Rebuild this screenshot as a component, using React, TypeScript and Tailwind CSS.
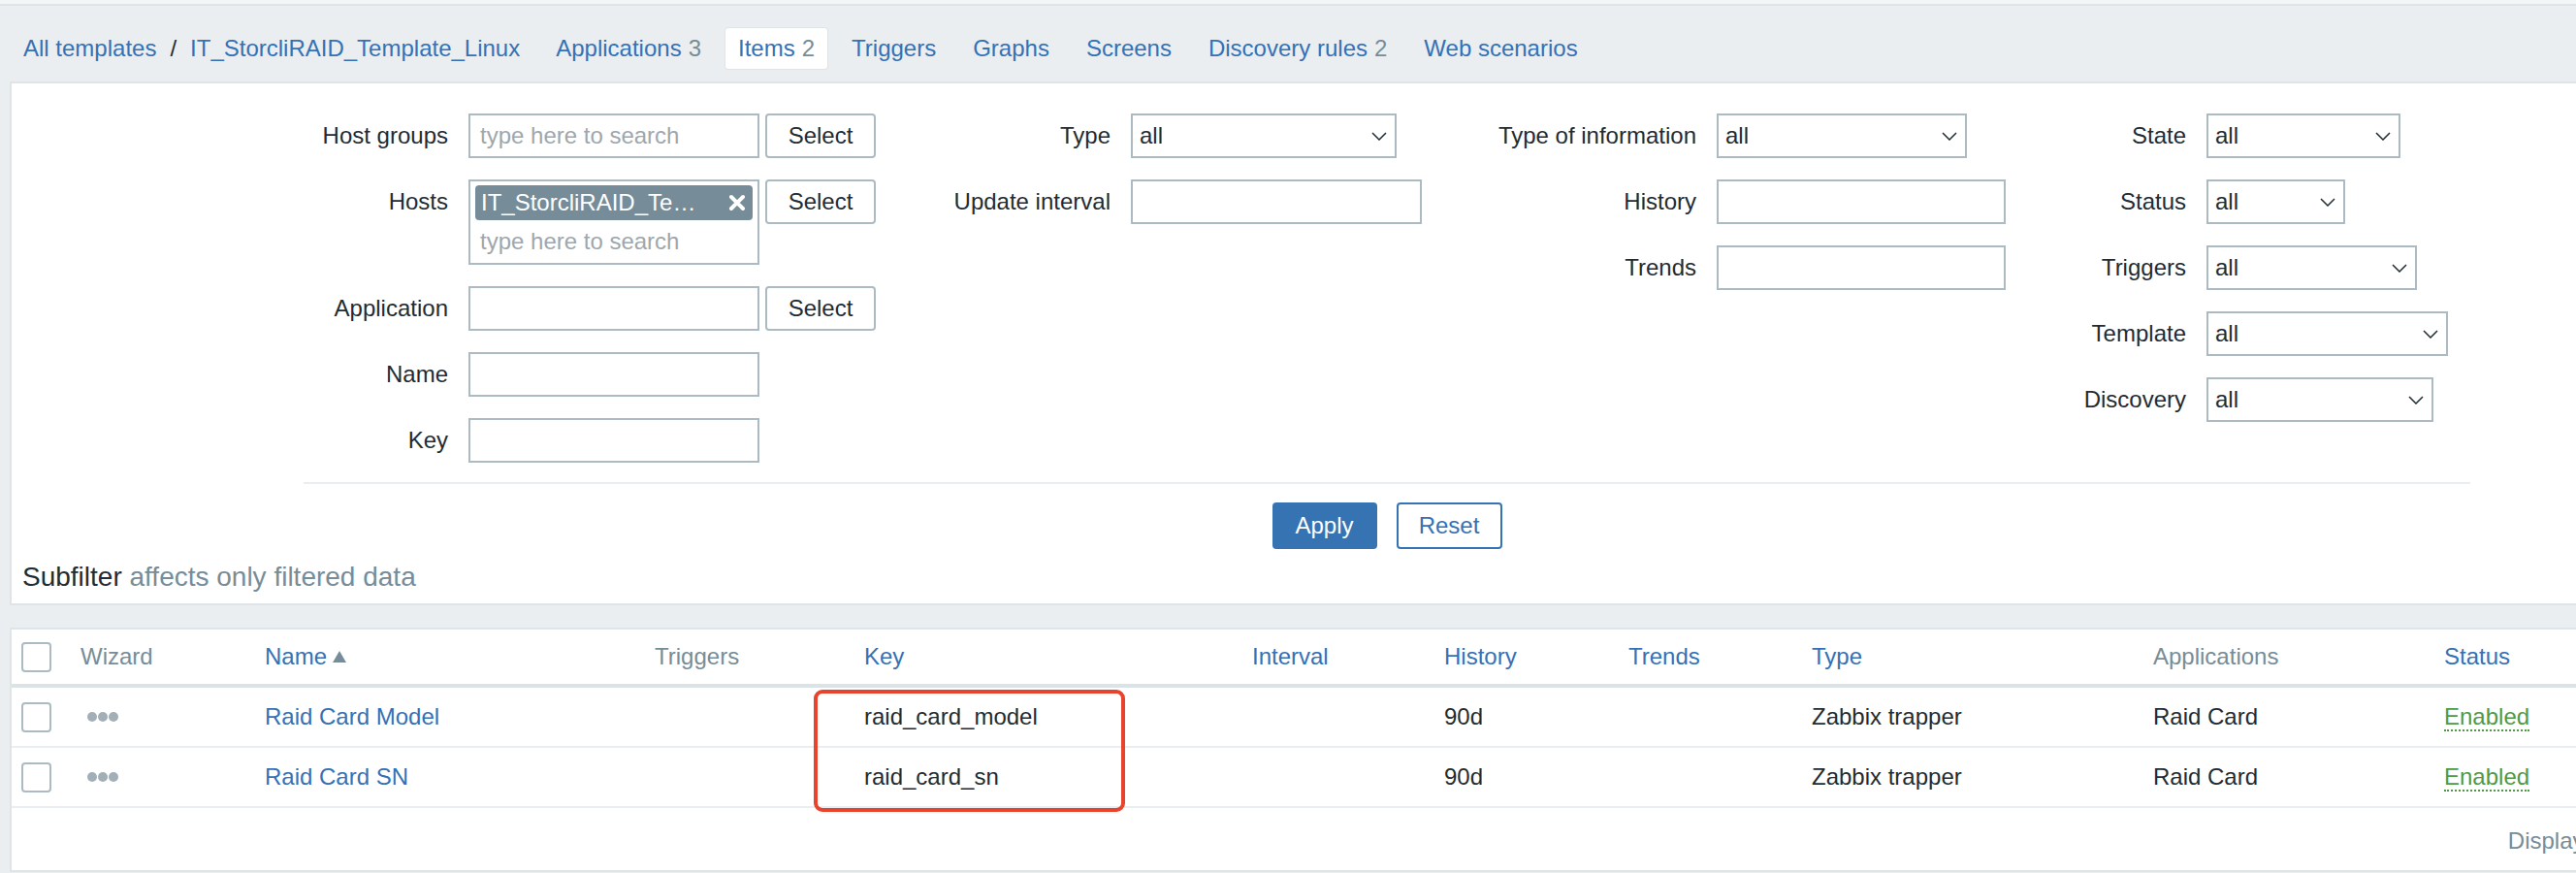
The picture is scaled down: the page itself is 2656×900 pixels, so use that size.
import clsx from "clsx";

const cols =
  "grid grid-cols-[61px_190px_402px_216px_400px_198px_190px_189px_352px_300px_1fr] items-center";

function Chevron() {
  return (
    <svg width="16" height="9" viewBox="0 0 16 9" className="shrink-0">
      <polyline points="1,1 8,8 15,1" fill="none" stroke="#1f2c33" strokeWidth="1.5" />
    </svg>
  );
}

function Label({ children }: { children: React.ReactNode }) {
  return <div className="flex h-[46px] items-center justify-end whitespace-nowrap text-[#1f2c33]">{children}</div>;
}

function TextBox({ placeholder, w = "w-[300px]" }: { placeholder?: string; w?: string }) {
  return (
    <div className={clsx("flex h-[46px] items-center border-2 border-[#acbbc2] bg-white px-[10px] text-[#9ea7ad]", w)}>
      {placeholder}
    </div>
  );
}

function SelectButton() {
  return (
    <div className="flex h-[46px] w-[114px] items-center justify-center rounded-[4px] border-2 border-[#acbbc2] bg-white text-[#1f2c33]">
      Select
    </div>
  );
}

function Dropdown({ w }: { w: string }) {
  return (
    <div className={clsx("flex h-[46px] items-center justify-between border-2 border-[#acbbc2] bg-white pl-[7px] pr-[8px] text-[#1f2c33]", w)}>
      <span>all</span>
      <Chevron />
    </div>
  );
}

function Checkbox() {
  return <div className="h-[31px] w-[31px] rounded-[4px] border-2 border-[#acbbc2] bg-white" />;
}

function Tab({ label, count, active }: { label: string; count?: number; active?: boolean }) {
  return (
    <span
      className={clsx(
        "ml-[12px] flex h-[42px] items-center px-[13px] text-[#3471b6]",
        active && "rounded-[3px] bg-white shadow-[0_0_0_1px_#dfe4e7]"
      )}
    >
      {label}
      {count !== undefined && <span className="ml-[7px] text-[#768d99]">{count}</span>}
    </span>
  );
}

function Dots() {
  return (
    <div className="ml-[7px] flex gap-[1px]">
      <span className="h-[10px] w-[10px] rounded-full bg-[#a3afb7]" />
      <span className="h-[10px] w-[10px] rounded-full bg-[#a3afb7]" />
      <span className="h-[10px] w-[10px] rounded-full bg-[#a3afb7]" />
    </div>
  );
}

const rows = [
  { name: "Raid Card Model", key: "raid_card_model" },
  { name: "Raid Card SN", key: "raid_card_sn" },
];

export default function App() {
  return (
    <div className="h-[900px] w-full overflow-hidden bg-[#ebeef0] font-['Liberation_Sans',Arial,sans-serif] text-[24px] leading-[28px]">
      <div className="w-[2860px]">
        <div className="h-[4px] bg-[#f4f5f6]" />
        <div className="h-[2px] bg-[#dfe4e7]" />

        {/* breadcrumbs + tabs */}
        <div className="flex items-center pb-[13px] pl-[24px] pt-[23px]">
          <span className="text-[#3471b6]">All templates</span>
          <span className="mx-[14px] text-[#1f2c33]">/</span>
          <span className="text-[#3471b6]">IT_StorcliRAID_Template_Linux</span>
          <span className="ml-[12px]" />
          <Tab label="Applications" count={3} />
          <Tab label="Items" count={2} active />
          <Tab label="Triggers" />
          <Tab label="Graphs" />
          <Tab label="Screens" />
          <Tab label="Discovery rules" count={2} />
          <Tab label="Web scenarios" />
        </div>

        {/* filter */}
        <div className="ml-[10px] w-[2838px] border-2 border-r-0 border-[#dfe4e7] bg-white">
          <div className="flex pl-[301px] pt-[31px]">
            <div className="grid w-[652px] grid-cols-[149px_auto] content-start items-start gap-x-[21px] gap-y-[22px]">
              <Label>Host groups</Label>
              <div className="flex gap-[6px]">
                <TextBox placeholder="type here to search" />
                <SelectButton />
              </div>
              <Label>Hosts</Label>
              <div className="flex gap-[6px]">
                <div className="h-[88px] w-[300px] border-2 border-[#acbbc2] bg-white px-[5px] pt-[4px]">
                  <div className="flex h-[36px] items-center justify-between rounded-[4px] bg-[#768d99] pl-[6px] pr-[7px] text-white">
                    <span>IT_StorcliRAID_Te…</span>
                    <svg width="18" height="18" viewBox="0 0 18 18">
                      <path d="M3 3 L15 15 M15 3 L3 15" stroke="#fff" strokeWidth="4" strokeLinecap="round" />
                    </svg>
                  </div>
                  <div className="mt-[8px] pl-[5px] text-[#9ea7ad]">type here to search</div>
                </div>
                <SelectButton />
              </div>
              <Label>Application</Label>
              <div className="flex gap-[6px]">
                <TextBox />
                <SelectButton />
              </div>
              <Label>Name</Label>
              <TextBox />
              <Label>Key</Label>
              <TextBox />
            </div>

            <div className="grid w-[565px] grid-cols-[180px_auto] content-start items-start gap-x-[21px] gap-y-[22px]">
              <Label>Type</Label>
              <Dropdown w="w-[274px]" />
              <Label>Update interval</Label>
              <TextBox />
            </div>

            <div className="grid w-[570px] grid-cols-[219px_auto] content-start items-start gap-x-[21px] gap-y-[22px]">
              <Label>Type of information</Label>
              <Dropdown w="w-[258px]" />
              <Label>History</Label>
              <TextBox w="w-[298px]" />
              <Label>Trends</Label>
              <TextBox w="w-[298px]" />
            </div>

            <div className="grid grid-cols-[154px_auto] content-start items-start gap-x-[21px] gap-y-[22px]">
              <Label>State</Label>
              <Dropdown w="w-[200px]" />
              <Label>Status</Label>
              <Dropdown w="w-[143px]" />
              <Label>Triggers</Label>
              <Dropdown w="w-[217px]" />
              <Label>Template</Label>
              <Dropdown w="w-[249px]" />
              <Label>Discovery</Label>
              <Dropdown w="w-[234px]" />
            </div>
          </div>

          <div className="mx-[301px] mt-[20px] h-[2px] bg-[#ebeef0]" />

          <div className="mt-[19px] flex justify-center gap-[20px]">
            <button className="h-[48px] w-[108px] rounded-[4px] bg-[#3673b3] text-white">Apply</button>
            <button className="h-[48px] w-[109px] rounded-[4px] border-2 border-[#3673b3] bg-white text-[#3471b6]">
              Reset
            </button>
          </div>

          <div className="mt-[13px] pb-[11px] pl-[11px] text-[28px] leading-[32px]">
            <span className="text-[#1f2c33]">Subfilter</span>{" "}
            <span className="text-[#768d99]">affects only filtered data</span>
          </div>
        </div>

        {/* items table */}
        <div className="relative ml-[10px] mt-[23px] w-[2838px] border-2 border-r-0 border-[#dfe4e7] bg-white">
          <div className={clsx(cols, "h-[60px] border-b-4 border-[#dce3e6]")}>
            <div className="pl-[10px]">
              <Checkbox />
            </div>
            <div className="pl-[10px] text-[#768d99]">Wizard</div>
            <div className="flex items-center pl-[10px] text-[#3471b6]">
              Name
              <svg width="16" height="14" viewBox="0 0 16 14" className="ml-[5px]">
                <polygon points="8,1 15,13 1,13" fill="#768d99" />
              </svg>
            </div>
            <div className="pl-[10px] text-[#768d99]">Triggers</div>
            <div className="pl-[10px] text-[#3471b6]">Key</div>
            <div className="pl-[10px] text-[#3471b6]">Interval</div>
            <div className="pl-[10px] text-[#3471b6]">History</div>
            <div className="pl-[10px] text-[#3471b6]">Trends</div>
            <div className="pl-[10px] text-[#3471b6]">Type</div>
            <div className="pl-[10px] text-[#768d99]">Applications</div>
            <div className="pl-[10px] text-[#3471b6]">Status</div>
          </div>

          {rows.map((r) => (
            <div key={r.key} className={clsx(cols, "h-[62px] border-b-2 border-[#ebeef0] text-[#1f2c33]")}>
              <div className="pl-[10px]">
                <Checkbox />
              </div>
              <div className="pl-[10px]">
                <Dots />
              </div>
              <div className="pl-[10px] text-[#3471b6]">{r.name}</div>
              <div className="pl-[10px]" />
              <div className="pl-[10px]">{r.key}</div>
              <div className="pl-[10px]" />
              <div className="pl-[10px]">90d</div>
              <div className="pl-[10px]" />
              <div className="pl-[10px]">Zabbix trapper</div>
              <div className="pl-[10px]">Raid Card</div>
              <div className="pl-[10px]">
                <span className="border-b-2 border-dotted border-[#4f9a45] text-[#4f9a45]">Enabled</span>
              </div>
            </div>
          ))}

          <div className="flex h-[64px] items-center justify-end pr-[18px] pt-[3px] text-[#768d99]">
            Displaying 2 of 2 found
          </div>

          <div className="absolute left-[827px] top-[62px] h-[126px] w-[321px] rounded-[9px] border-4 border-[#e8432c]" />
        </div>
      </div>
    </div>
  );
}
